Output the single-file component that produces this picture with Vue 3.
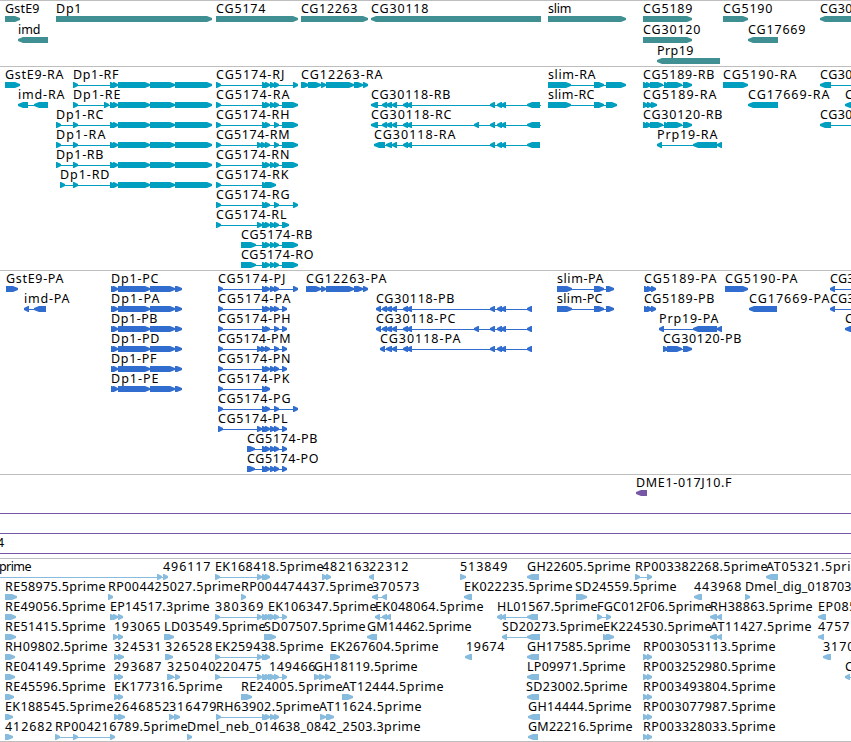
<template>
  <main class="browser">
    <section v-for="track in tracks" :key="track.name" class="track">
      <svg class="canvas" width="851" :height="track.height">
        <g v-for="(item, i) in track.items" :key="i" :fill="track.color">
          <path class="glyph" :d="glyphPath(item)" />
          <text
            v-if="item[1]"
            class="label"
            :x="item[2] - 1"
            :y="item[0] * track.pitch + 12"
            :textLength="item[3] - item[2] + 1.5"
          >{{ item[1] }}</text>
        </g>
      </svg>
    </section>
  </main>
</template>

<script setup>
// item: [row, label, label start, label end, strand, blocks, line start, line end]
// a block without an end is a minimal 5px exon
const dp1 = "110-115 113-118 118-150 150-175 175-212";
const dp1P = "111-116 113-118 118-150 150-175 175-182";
const exons = "262-267 265 270-275 274";
const slimTail = "594-604 606";
const cg30118 = "403-408 407 490 497-502 501";
const cg5189 = "643-648 646-651 650-663 664-669 667-682 683-692";

const genes = [
  [0, "GstE9", 6, 39, ">", "5-20"],
  [0, "Dp1", 57, 81, ">", "56-212"],
  [0, "CG5174", 217, 265, ">", "216-298"],
  [0, "CG12263", 302, 357, ">", "301-368"],
  [0, "CG30118", 372, 428, "<", "371-541"],
  [0, "slim", 549, 571, ">", "548-626"],
  [0, "CG5189", 644, 692, ">", "643-692"],
  [0, "CG5190", 724, 772, ">", "723-748"],
  [0, "CG30", 821, 852, "<", "820-860"],
  [1, "imd", 19, 40, "<", "18-48"],
  [1, "CG30120", 644, 700, ">", "643-692"],
  [1, "CG17669", 749, 805, "<", "748-778"],
  [2, "Prp19", 658, 693, "<", "657-720"],
];

const transcripts = [
  [0, "GstE9-RA", 6, 63, ">", "5-20"],
  [1, "imd-RA", 19, 64, "<", "18-28 34-48"],
  [0, "Dp1-RF", 74, 118, ">", `73 ${dp1}`],
  [1, "Dp1-RE", 74, 120, ">", `73 104 ${dp1}`],
  [2, "Dp1-RC", 57, 103, ">", `56 73 ${dp1}`],
  [3, "Dp1-RA", 57, 105, ">", `56 73 ${dp1}`],
  [4, "Dp1-RB", 57, 103, ">", `56 73 ${dp1}`],
  [5, "Dp1-RD", 61, 109, ">", `60 73 ${dp1}`],
  [0, "CG5174-RJ", 217, 284, ">", `216 ${exons} 293`],
  [1, "CG5174-RA", 217, 289, ">", `216 ${exons} 282-298`],
  [2, "CG5174-RH", 217, 289, ">", "216 262-267 265 274 282-298"],
  [3, "CG5174-RM", 217, 289, ">", "216 257 261 265 274 282-298"],
  [4, "CG5174-RN", 217, 289, ">", `216 ${exons} 282-298`],
  [5, "CG5174-RK", 217, 288, ">", "216 262-267 265-276"],
  [6, "CG5174-RG", 217, 289, ">", "216 262-267 265 274 293"],
  [7, "CG5174-RL", 217, 286, ">", `216 257 ${exons} 282-289`],
  [8, "CG5174-RB", 242, 312, ">", `241-256 ${exons} 282-298`],
  [9, "CG5174-RO", 242, 313, ">", `241-256 ${exons} 282-298`],
  [0, "CG12263-RA", 302, 382, ">", "301-309 308-321 321 326-354 354-363 363"],
  [1, "CG30118-RB", 372, 450, "<", `371-378 382 386-392 392 ${cg30118} 527-540`, 371, 541],
  [2, "CG30118-RC", 372, 451, "<", `371-378 382 386-392 392 474 ${cg30118} 527-540`, 371, 541],
  [3, "CG30118-RA", 375, 455, "<", `374-385 386-392 392 ${cg30118} 527-540`],
  [0, "slim-RA", 549, 595, ">", `548-571 ${slimTail}-626`],
  [1, "slim-RC", 549, 594, ">", `548-571 ${slimTail}-617`],
  [0, "CG5189-RB", 644, 714, ">", cg5189],
  [1, "CG5189-RA", 644, 716, ">", "643-648 647-652 651-657"],
  [2, "CG30120-RB", 644, 722, ">", cg5189],
  [3, "Prp19-RA", 658, 717, "<", "657 693-717 717"],
  [0, "CG5190-RA", 724, 796, ">", "723-748"],
  [1, "CG17669-RA", 749, 829, "<", "748-778"],
  [0, "CG30", 821, 852, "<", "820-831", 820, 860],
  [1, "C", 846, 854, "<", "845-860"],
  [2, "CG30", 821, 852, "<", "820-831", 820, 860],
];

const proteins = [
  [0, "GstE9-PA", 7, 63, ">", "6-18"],
  [1, "imd-PA", 25, 69, "<", "24 34-46"],
  [0, "Dp1-PC", 112, 158, ">", dp1P],
  [1, "Dp1-PA", 112, 159, ">", dp1P],
  [2, "Dp1-PB", 112, 157, ">", dp1P],
  [3, "Dp1-PD", 112, 159, ">", dp1P],
  [4, "Dp1-PF", 112, 156, ">", dp1P],
  [5, "Dp1-PE", 112, 158, ">", dp1P],
  [0, "CG5174-PJ", 219, 285, ">", `218 ${exons} 293`],
  [1, "CG5174-PA", 219, 290, ">", `218 ${exons} 282`],
  [2, "CG5174-PH", 219, 290, ">", "218 262-267 265 274 282"],
  [3, "CG5174-PM", 219, 290, ">", "218 257 261 265 274 282"],
  [4, "CG5174-PN", 219, 290, ">", `218 ${exons} 282`],
  [5, "CG5174-PK", 219, 289, ">", "218 262-267 265"],
  [6, "CG5174-PG", 219, 290, ">", "218 262-267 265 274 293"],
  [7, "CG5174-PL", 219, 287, ">", `218 257 ${exons} 282`],
  [8, "CG5174-PB", 248, 317, ">", `247-255 ${exons} 282`],
  [9, "CG5174-PO", 248, 318, ">", `247-255 ${exons} 282`],
  [0, "CG12263-PA", 307, 386, ">", "306-311 308-321 321 326-354 354-363 363"],
  [1, "CG30118-PB", 377, 454, "<", `376 382 386-392 392 ${cg30118} 527`],
  [2, "CG30118-PC", 377, 455, "<", `376 382 386-392 392 474 ${cg30118} 527`],
  [3, "CG30118-PA", 381, 460, "<", `380 386-392 392 ${cg30118} 527`],
  [0, "slim-PA", 558, 603, ">", `557-572 ${slimTail}-614`],
  [1, "slim-PC", 558, 602, ">", `557-572 ${slimTail}-614`],
  [0, "CG5189-PA", 645, 716, ">", "644-649 647-652 651-656"],
  [1, "CG5189-PB", 645, 714, ">", "644-649 647-652 651-656"],
  [2, "Prp19-PA", 660, 718, "<", "659 693-717 717"],
  [3, "CG30120-PB", 664, 741, ">", "663-668 667-682 683-692"],
  [0, "CG5190-PA", 726, 797, ">", "725-748"],
  [1, "CG17669-PA", 750, 829, "<", "749-777"],
  [0, "CG3", 831, 854, "<", "830", 830, 860],
  [1, "CG3", 831, 854, "<", "830", 830, 860],
  [2, "C", 846, 854, "<", "845-860"],
];

const bacs = [
  [0, "DME1-017J10.F", 637, 731, "<", "636-647"],
  [1, "", 0, 0, ">", "", 0, 851],
  [2, "", 0, 0, ">", "", 0, 851],
  [3, "4", -2, 5, ">", "", 0, 851],
];

const ests = [
  [0, "prime", 0, 31, ">", "157 163", 0, 163],
  [0, "496117", 164, 210, ">", ""],
  [0, "EK168418.5prime", 216, 323, ">", "215 257 262-267 265"],
  [0, "482163", 323, 369, ">", "322 326"],
  [0, "22312", 370, 408, "<", "369"],
  [0, "513849", 461, 507, ">", "460-466"],
  [0, "GH22605.5prime", 528, 630, "<", "527-539"],
  [0, "RP003382268.5prime", 636, 767, ">", "635 647"],
  [0, "AT05321.5pri", 767, 850, "<", "766-778"],
  [1, "RE58975.5prime", 6, 105, ">", "5-17"],
  [1, "RP004425027.5prime", 109, 240, ">", "108"],
  [1, "RP004474437.5prime", 242, 373, ">", "241"],
  [1, "370573", 373, 419, "<", "372-378 382"],
  [1, "EK022235.5prime", 465, 572, "<", "464-472"],
  [1, "SD24559.5prime", 576, 676, ">", "576-587"],
  [1, "443968", 695, 741, "<", "694-702"],
  [1, "Dmel_dig_018703", 746, 851, ">", "745"],
  [2, "RE49056.5prime", 6, 105, ">", "5-16"],
  [2, "EP14517.3prime", 111, 209, ">", "110-115 113-118 118"],
  [2, "380369", 216, 263, ">", `215 257 ${exons} 282`],
  [2, "EK106347.5prime", 269, 376, ">", "268"],
  [2, "EK048064.5prime", 376, 483, "<", "375 382 386"],
  [2, "HL01567.5prime", 498, 597, "<", "497-502 501 527-538"],
  [2, "FGC012F06.5prime", 598, 711, ">", "597-602 606"],
  [2, "RH38863.5prime", 711, 812, "<", "710-717 717"],
  [2, "EP085", 819, 856, "<", "818-826"],
  [3, "RE51415.5prime", 6, 105, ">", "5-16"],
  [3, "193065", 115, 160, ">", "113-118 118"],
  [3, "LD03549.5prime", 165, 265, ">", "164-174"],
  [3, "SD07507.5prime", 265, 365, ">", "264-276"],
  [3, "GM14462.5prime", 368, 471, "<", "367-377"],
  [3, "SD20273.5prime", 503, 603, "<", "502 527-540"],
  [3, "EK224530.5prime", 604, 711, ">", "603-608 606-614"],
  [3, "AT11427.5prime", 711, 811, "<", "710-717 717"],
  [3, "4757", 819, 849, "<", "818-824"],
  [4, "RH09802.5prime", 6, 107, ">", "5-15"],
  [4, "324531", 115, 161, ">", "114-119 118-124"],
  [4, "326528", 166, 212, ">", "165-173"],
  [4, "EK259438.5prime", 216, 323, ">", "215 257 262-267 265"],
  [4, "EK267604.5prime", 331, 438, ">", "330-340"],
  [4, "19674", 467, 504, "<", "465-472"],
  [4, "GH17585.5prime", 528, 630, "<", "527-539"],
  [4, "RP003053113.5prime", 644, 775, ">", "643-648 647"],
  [4, "3170", 824, 854, "<", "823-831"],
  [5, "RE04149.5prime", 6, 105, ">", "5-15"],
  [5, "293687", 115, 161, ">", "114-119 118"],
  [5, "325040", 168, 215, ">", "167-174 175"],
  [5, "220475", 216, 261, ">", `215 257 ${exons} 282`],
  [5, "149466", 270, 315, ">", "268"],
  [5, "GH18119.5prime", 315, 417, ">", "314-320 319-325 325-331"],
  [5, "LP09971.5prime", 528, 625, "<", "527-539"],
  [5, "RP003252980.5prime", 644, 775, ">", "643-648 647"],
  [5, "C", 846, 854, "<", "845", 845, 860],
  [6, "RE45596.5prime", 6, 105, ">", "5-14"],
  [6, "EK177316.5prime", 115, 222, ">", "114-119 118"],
  [6, "RE24005.5prime", 242, 342, ">", "241-252"],
  [6, "AT12444.5prime", 343, 443, ">", "342-353"],
  [6, "SD23002.5prime", 527, 627, "<", "527-539"],
  [6, "RP003493804.5prime", 644, 775, ">", "643-648 647"],
  [7, "EK188545.5prime", 6, 113, ">", "5-13"],
  [7, "2646852", 115, 169, ">", "114-119 118-125"],
  [7, "316479", 170, 216, ">", "169-174 174-180"],
  [7, "RH63902.5prime", 217, 319, ">", `216 ${exons}`],
  [7, "AT11624.5prime", 320, 421, ">", "320-326 326-334"],
  [7, "GH14444.5prime", 529, 631, "<", "528-540"],
  [7, "RP003077987.5prime", 644, 775, ">", "643-648 647"],
  [8, "412682", 6, 52, ">", "5-13"],
  [8, "RP004216789.5prime", 56, 187, ">", "55 73 110"],
  [8, "Dmel_neb_014638_0842_2503.3prime", 188, 420, ">", "187"],
  [8, "GM22216.5prime", 529, 632, "<", "528-538"],
  [8, "RP003328033.5prime", 644, 775, ">", "643-648 647"],
];

const tracks = [
  { name: "genes", color: "#3f8f93", height: 65, pitch: 21, items: genes },
  { name: "transcripts", color: "#009fc0", height: 203, pitch: 20, items: transcripts },
  { name: "proteins", color: "#316ccf", height: 203, pitch: 20, items: proteins },
  { name: "bacs", color: "#7657a5", height: 83, pitch: 20, items: bacs },
  { name: "ests", color: "#87bcde", height: 182, pitch: 20, items: ests },
];

tracks.forEach((track) => {
  track.items.forEach((item) => {
    item.top = item[0] * track.pitch + 15;
  });
});

const glyphPath = (item) => {
  const [, , , , strand, blocks, from, to] = item;
  const top = item.top;
  const spans = blocks
    ? blocks.split(" ").map((block) => {
        const [start, end] = block.split("-").map(Number);
        return [start, end || start + 5];
      })
    : [];
  let d = "";
  if (to || spans.length > 1) {
    const x1 = to ? from : spans[0][0];
    const x2 = to || spans[spans.length - 1][1];
    d += `M${x1} ${top + 3}H${x2}V${top + 4}H${x1}Z`;
  }
  spans.forEach(([x1, x2]) => {
    // short exons keep one full-height pixel behind the head
    const head = Math.min(5, x2 - x1 - 1);
    if (strand === ">") {
      d += `M${x1} ${top}H${x2 - head}L${x2} ${top + 2}V${top + 4}L${x2 - head} ${top + 6}H${x1}Z`;
    } else {
      d += `M${x1} ${top + 2}L${x1 + head} ${top}H${x2}V${top + 6}H${x1 + head}L${x1} ${top + 4}Z`;
    }
  });
  return d;
};
</script>

<style>
body {
  margin: 0;
  background: #fff;
}
</style>

<style scoped>
.browser {
  width: 851px;
  overflow: hidden;
  border-bottom: 1px solid #bebebe;
}

.track {
  border-top: 1px solid #bebebe;
}

.canvas {
  display: block;
}

.label {
  font-family: "Noto Sans", "DejaVu Sans", sans-serif;
  font-size: 12.5px;
  fill: #000;
}
</style>
